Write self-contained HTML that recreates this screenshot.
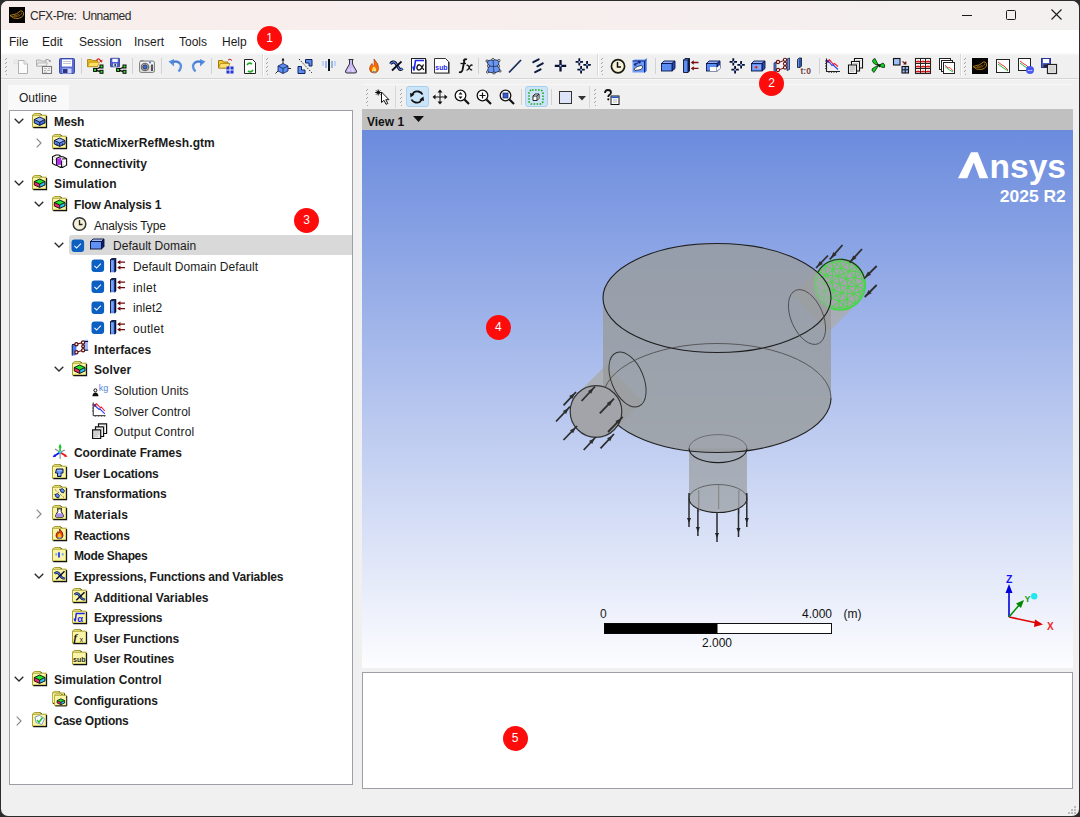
<!DOCTYPE html><html><head><meta charset="utf-8"><style>
*{box-sizing:border-box;margin:0;padding:0}
html,body{width:1080px;height:817px;overflow:hidden;background:#2c2c2c;font-family:"Liberation Sans",sans-serif;font-size:12px;color:#1b1b1b}
.a{position:absolute}
svg.a{overflow:visible}
.t{position:absolute;white-space:nowrap;font-size:12px;line-height:14px;color:#1b1b1b}
.b{font-weight:bold}
.mi{position:absolute;top:35px;font-size:12px;line-height:14px;color:#1b1b1b}
.badge{position:absolute;width:25px;height:25px;border-radius:50%;background:#fe0b0b;color:#fff;font-size:12px;line-height:25px;text-align:center}
.sep{position:absolute;width:1px;background:#d2d2d2}
.grip{position:absolute;width:2px;height:18px;background:linear-gradient(-45deg,transparent 35%,#a4a4a4 35%,#a4a4a4 65%,transparent 65%) 0 0/2px 4px repeat-y}
</style></head><body>
<div class="a" style="left:1px;top:1px;width:1078px;height:815px;background:#f0f0f0;border-radius:7px;overflow:hidden">
<div class="a" style="left:0;top:0;width:1078px;height:29px;background:linear-gradient(90deg,#f8eeec 0%,#f7efee 50%,#f3f0f0 100%)"></div>
<div class="a" style="left:0;top:29px;width:1078px;height:23px;background:#fff"></div>
<div class="a" style="left:0;top:52px;width:1078px;height:2px;background:#f7f7f7"></div>
<div class="a" style="left:0;top:77px;width:1078px;height:1px;background:#d4d4d4"></div>
<div class="a" style="left:0;top:78px;width:1078px;height:1px;background:#f8f8f8"></div>
</div>
<svg class="a" style="left:9px;top:7px" width="16" height="16" viewBox="0 0 16 16"><rect x="0" y="0" width="16" height="16" fill="#050403"/><path d="M1 8.5Q4 12 9 11.5Q13 11 14.5 8Q15 5 13 4Q11 3.5 10 5Q8 7 5 7.5Q2.5 8 1 8.5Z" fill="none" stroke="#c08a18" stroke-width="0.9"/><path d="M3 9.5Q7 10.5 11 8.5Q13 7 12.5 5.5M5 8.5Q8 9 10.5 7" stroke="#a87010" stroke-width="0.7" fill="none"/></svg>
<div class="t" style="left:30px;top:9px;color:#2a2a2a;letter-spacing:-0.45px">CFX-Pre:&nbsp; Unnamed</div>
<div class="a" style="left:962px;top:15px;width:10px;height:1px;background:#1a1a1a"></div>
<div class="a" style="left:1006px;top:10px;width:10px;height:10px;border:1px solid #1a1a1a;border-radius:1.5px"></div>
<svg class="a" style="left:1051px;top:9px" width="11" height="11"><path d="M0.5 0.5L10.5 10.5M10.5 0.5L0.5 10.5" stroke="#1a1a1a" stroke-width="1.1"/></svg>
<div class="mi" style="left:9px">File</div>
<div class="mi" style="left:42px">Edit</div>
<div class="mi" style="left:79px">Session</div>
<div class="mi" style="left:134px">Insert</div>
<div class="mi" style="left:179px">Tools</div>
<div class="mi" style="left:222px">Help</div>
<div class="grip" style="left:5px;top:57px"></div>
<svg class="a" style="left:13px;top:58px" width="16" height="16" viewBox="0 0 16 16"><path d="M5.5 2.5H11L14.5 6V15.5H5.5Z" fill="#fbfbfb" stroke="#b0b0b0"/><path d="M11 2.5V6H14.5" fill="#eee" stroke="#c0c0c0"/><path d="M3 1V7M0 4H6M1 2L5 6M5 2L1 6" stroke="#dadada" stroke-width="0.9"/><circle cx="3" cy="4" r="1.2" fill="#eee"/></svg>
<svg class="a" style="left:36px;top:58px" width="16" height="16" viewBox="0 0 16 16"><path d="M0.5 2H4.5L5.5 3H10V8H0.5Z" fill="#e2e2e2" stroke="#aaa" stroke-width="0.9"/><path d="M0.5 8L2 5H11.5L10 8Z" fill="#f2f2f2" stroke="#aaa" stroke-width="0.7"/><path d="M9 2.5Q11 0.5 13 2L14 3" stroke="#999" fill="none"/><path d="M15 1.8L14.5 4.3L12.5 3.5Z" fill="#999"/><rect x="6.5" y="8.5" width="9" height="7" fill="#f6f6f6" stroke="#777" stroke-width="1.1"/><path d="M8 10.7H11M12 10.7H14M8 12.5H10M11 12.5H14M8 14.2H11" stroke="#999" stroke-width="0.7"/></svg>
<svg class="a" style="left:59px;top:58px" width="16" height="16" viewBox="0 0 16 16"><rect x="0.5" y="0.5" width="15" height="15" rx="1" fill="#5b6ed6" stroke="#3b4aa8"/><rect x="3" y="1.5" width="10" height="7" fill="#fff"/><path d="M4 3.5H12M4 5.5H12" stroke="#aab" stroke-width="0.7"/><rect x="3.5" y="10.5" width="9" height="5" fill="#cfd6ff"/><rect x="4" y="11" width="4.5" height="4" fill="#2a3580"/></svg>
<svg class="a" style="left:87px;top:58px" width="16" height="16" viewBox="0 0 16 16"><path d="M0.5 1.5H4.5L5.5 2.5H10.5V8.6H0.5Z" fill="#e8b818" stroke="#a07a10" stroke-width="0.8"/><path d="M0.5 8.6L2.5 4.2H12.5L10.5 8.6Z" fill="#ffe060" stroke="#b08a10" stroke-width="0.7"/><path d="M9.5 2.5Q11 0 12.5 1.5L14 3" stroke="#dd2020" stroke-width="1.2" fill="none"/><path d="M15.5 1.5L15 4.5L12.5 3.8Z" fill="#dd2020"/><path d="M8 12L14.5 8.5M8 12L14.5 13.8" stroke="#111" stroke-width="1.4"/><g fill="#2ee02e" stroke="#0a0a0a" stroke-width="1"><rect x="6.6" y="10.4" width="3" height="3"/><rect x="13" y="7" width="3" height="3"/><rect x="13" y="12.3" width="3" height="3"/></g></svg>
<svg class="a" style="left:110px;top:58px" width="16" height="16" viewBox="0 0 16 16"><rect x="0.5" y="0.3" width="9" height="8.5" rx="0.5" fill="#4a5ed0" stroke="#2a3590" stroke-width="0.8"/><rect x="2.3" y="0.8" width="5.5" height="3.2" fill="#f4f4ff"/><rect x="3" y="5.5" width="4" height="3" fill="#d8dcf8"/><rect x="4.5" y="5.8" width="1.4" height="2.4" fill="#223"/><path d="M8 12L14.5 8.5M8 12L14.5 13.8" stroke="#111" stroke-width="1.4"/><g fill="#2ee02e" stroke="#0a0a0a" stroke-width="1"><rect x="6.6" y="10.4" width="3" height="3"/><rect x="13" y="7" width="3" height="3"/><rect x="13" y="12.3" width="3" height="3"/></g></svg>
<svg class="a" style="left:139px;top:58px" width="16" height="16" viewBox="0 0 16 16"><rect x="0.5" y="3" width="15" height="11.5" rx="1.8" fill="#dcdcdc" stroke="#777" stroke-width="0.9"/><rect x="1.5" y="4" width="13" height="3" fill="#f4f4f4"/><circle cx="6" cy="9" r="3.8" fill="#bbb" stroke="#555" stroke-width="0.9"/><circle cx="6" cy="9" r="2.2" fill="#3a6ad0" stroke="#222" stroke-width="0.6"/><rect x="12" y="6.5" width="2" height="6.5" fill="#555"/><circle cx="11" cy="4.5" r="0.9" fill="#3a6ad0"/><rect x="1.5" y="2" width="3" height="1.2" fill="#888"/></svg>
<svg class="a" style="left:168px;top:58px" width="16" height="16" viewBox="0 0 16 16"><path d="M3.5 4.5Q9 2 12 5.5Q14.5 9 10.5 13.5" stroke="#5a90e0" stroke-width="2.4" fill="none"/><path d="M0.5 3.5L6 1V8.5Z" fill="#5a90e0"/><path d="M3.5 4.5Q9 2 12 5.5" stroke="#2a60c0" stroke-width="0.6" fill="none"/></svg>
<svg class="a" style="left:190px;top:58px" width="16" height="16" viewBox="0 0 16 16"><path d="M12.5 4.5Q7 2 4 5.5Q1.5 9 5.5 13.5" stroke="#5a90e0" stroke-width="2.4" fill="none"/><path d="M15.5 3.5L10 1V8.5Z" fill="#5a90e0"/><path d="M12.5 4.5Q7 2 4 5.5" stroke="#2a60c0" stroke-width="0.6" fill="none"/></svg>
<svg class="a" style="left:218px;top:58px" width="16" height="16" viewBox="0 0 16 16"><path d="M0.5 2.5H4.5L5.5 4H10V10H0.5Z" fill="#f0c828" stroke="#a07a10"/><path d="M0.5 10L2.5 5.5H12L10 10Z" fill="#ffe070" stroke="#a07a10" stroke-width="0.7"/><path d="M10 2Q12 0 14 2.5" stroke="#dd2222" fill="none"/><rect x="8.5" y="8.5" width="7" height="7" fill="#2233dd"/><path d="M12 8.5V15.5M8.5 12H15.5" stroke="#fff" stroke-width="0.9"/></svg>
<svg class="a" style="left:242px;top:58px" width="16" height="16" viewBox="0 0 16 16"><path d="M2.5 1.5H10.5L13.5 4.5V15.5H2.5Z" fill="#fff" stroke="#222"/><path d="M5 7Q7 4 10 6" stroke="#22aa22" stroke-width="1.6" fill="none"/><path d="M11 12Q9 15 6 13" stroke="#22aa22" stroke-width="1.6" fill="none"/></svg>
<svg class="a" style="left:275px;top:58px" width="16" height="16" viewBox="0 0 16 16"><path d="M3 8L8 5.5L13 8V13L8 15.5L3 13Z" fill="#5b8ef0" stroke="#10205a" stroke-width="0.8"/><path d="M3 8L8 10.5L13 8M8 10.5V15.5" stroke="#10205a" stroke-width="0.8" fill="none"/><path d="M8 5.5V0.5M13 10.5H16M3 13L0.5 15.5" stroke="#111" stroke-width="0.9"/><path d="M8 0L6.5 2.5H9.5Z" fill="#111"/></svg>
<svg class="a" style="left:297px;top:58px" width="16" height="16" viewBox="0 0 16 16"><path d="M8.5 1.5H15V8H12V5H8.5Z" fill="#5b8ef0" stroke="#10205a"/><path d="M1 8.5H4.5V12H8V15.5H1Z" fill="#5b8ef0" stroke="#10205a"/><path d="M2 1L15 15" stroke="#222" stroke-dasharray="1.5 1.5"/></svg>
<svg class="a" style="left:321px;top:58px" width="16" height="16" viewBox="0 0 16 16"><path d="M8 1V13" stroke="#111" stroke-width="2"/><path d="M5 3V10M11 3V10" stroke="#5b8ef0" stroke-width="1.2"/><path d="M2 3V8M14 3V8" stroke="#a9c0f5" stroke-width="1.2"/></svg>
<svg class="a" style="left:343px;top:58px" width="16" height="16" viewBox="0 0 16 16"><path d="M5.5 1.5H10.5M6.5 1.5V6L2.5 13Q2 15 4 15H12Q14 15 13.5 13L9.5 6V1.5" fill="#c9b8f5" stroke="#333"/><circle cx="6" cy="12" r="0.7" fill="#fff"/><circle cx="9" cy="11" r="0.7" fill="#fff"/><circle cx="10" cy="13" r="0.7" fill="#fff"/></svg>
<svg class="a" style="left:366px;top:58px" width="16" height="16" viewBox="0 0 16 16"><path d="M8 1Q13 6 12.5 10.5Q12 15 8 15Q4 15 3.5 11Q3.5 8 6 5.5Q6.5 8 8 8.5Q8.5 5 8 1Z" fill="#ff6a00" stroke="#9a2a00" stroke-width="0.6"/><path d="M8 8Q10.5 10.5 10 13Q9 14.5 8 14.5Q6 14.5 6 12.5Q6 10.5 8 8Z" fill="#ffe15a"/><path d="M7 13Q8 14.8 9.5 13.5" stroke="#3a8ae0" stroke-width="1.2" fill="none"/></svg>
<svg class="a" style="left:389px;top:58px" width="16" height="16" viewBox="0 0 16 16"><path d="M1.5 6Q3.5 2.5 6.5 5L10 10.5Q11.5 12.5 13.5 10.5" stroke="#0a0a20" stroke-width="3" fill="none"/><path d="M1.5 6Q3.5 2.5 6.5 5L10 10.5Q11.5 12.5 13.5 10.5" stroke="#5a8af0" stroke-width="1.2" fill="none"/><path d="M12.5 3.5L3 12.5" stroke="#0a0a20" stroke-width="1.8"/></svg>
<svg class="a" style="left:411px;top:58px" width="16" height="16" viewBox="0 0 16 16"><rect x="0.5" y="0.5" width="14" height="14.5" fill="#fff" stroke="#222" stroke-width="1"/><path d="M1.5 15.5H15.5V1.5" stroke="#555" stroke-width="0.8" fill="none"/><path d="M2 8.5L3 12.5L4.5 2.5H13" stroke="#1a28f0" stroke-width="1.6" fill="none"/><path d="M12.5 6.5Q10 12.5 7.5 12Q5.5 11.5 6 9Q6.5 6.5 8.5 6.8Q10.5 7.5 12.8 12" stroke="#111" stroke-width="1.3" fill="none"/></svg>
<svg class="a" style="left:434px;top:58px" width="16" height="16" viewBox="0 0 16 16"><path d="M0.5 0.5H11.5L14.5 3.5V15H0.5Z" fill="#fff" stroke="#333" stroke-width="1"/><path d="M1.5 15.5H15.5V4" stroke="#666" stroke-width="0.8" fill="none"/><text x="1.3" y="11.5" font-size="8" fill="#2a2af0" font-weight="bold" font-family="Liberation Sans" textLength="12.3" lengthAdjust="spacingAndGlyphs">sub</text></svg>
<svg class="a" style="left:457px;top:58px" width="16" height="16" viewBox="0 0 16 16"><path d="M6.5 3Q7.5 0.5 10 1.5M7.5 2L5.5 12Q4.5 15 2 14" stroke="#111" stroke-width="1.8" fill="none"/><path d="M3.5 5.5H9" stroke="#111" stroke-width="1.3"/><path d="M9.5 7.5Q10.5 6.5 11.5 8L13 11Q14 12.5 15 11.5M9.5 12Q11 12.5 12.5 9L13.5 7.5Q14.5 6.5 15.5 7.5" stroke="#111" stroke-width="1.3" fill="none"/></svg>
<svg class="a" style="left:485px;top:58px" width="16" height="16" viewBox="0 0 16 16"><path d="M2 3L8 1.5L14 2.5L13.5 8L15 13L9 15L2.5 14L3.5 8Z" fill="#6a98f0" stroke="#10205a" stroke-width="0.8"/><path d="M3.5 8L8.5 8.5L13.5 8M8 1.5L8.5 8.5L9 15" stroke="#10205a" stroke-width="0.7" fill="none"/><g fill="#fff" stroke="#111" stroke-width="0.7"><circle cx="2" cy="3" r="1.1"/><circle cx="8" cy="1.5" r="1.1"/><circle cx="14" cy="2.5" r="1.1"/><circle cx="3.5" cy="8" r="1.1"/><circle cx="13.5" cy="8" r="1.1"/><circle cx="2.5" cy="14" r="1.1"/><circle cx="9" cy="15" r="1.1"/><circle cx="15" cy="13" r="1.1"/></g></svg>
<svg class="a" style="left:507px;top:58px" width="16" height="16" viewBox="0 0 16 16"><path d="M2 14.5L14 2" stroke="#1a2a5a" stroke-width="1.8"/></svg>
<svg class="a" style="left:530px;top:58px" width="16" height="16" viewBox="0 0 16 16"><path d="M3.3 4.2L8.7 1.3M7.4 8.3L12.8 5.4M5.2 14.2L10.6 11.4" stroke="#0f1a40" stroke-width="2" stroke-linecap="round"/></svg>
<svg class="a" style="left:553px;top:58px" width="16" height="16" viewBox="0 0 16 16"><path d="M1.7999999999999998 7.8H13.2M7.5 2.0999999999999996V13.5" stroke="#0a1030" stroke-width="2.3"/><path d="M5.7 7.8L7.5 6.0L9.3 7.8L7.5 9.6Z" fill="#0a1030"/><circle cx="7.5" cy="7.8" r="1" fill="#9ec0ff"/></svg>
<svg class="a" style="left:575px;top:58px" width="16" height="16" viewBox="0 0 16 16"><path d="M0.5999999999999996 3.9H8.0M4.3 0.19999999999999973V7.6" stroke="#0a1030" stroke-width="1.8"/><path d="M2.5 3.9L4.3 2.0999999999999996L6.1 3.9L4.3 5.7Z" fill="#0a1030"/><circle cx="4.3" cy="3.9" r="1" fill="#9ec0ff"/><path d="M8.399999999999999 6.8H15.8M12.1 3.0999999999999996V10.5" stroke="#0a1030" stroke-width="1.8"/><path d="M10.299999999999999 6.8L12.1 5.0L13.9 6.8L12.1 8.6Z" fill="#0a1030"/><circle cx="12.1" cy="6.8" r="1" fill="#9ec0ff"/><path d="M2.3999999999999995 11.7H9.8M6.1 7.999999999999999V15.399999999999999" stroke="#0a1030" stroke-width="1.8"/><path d="M4.3 11.7L6.1 9.899999999999999L7.8999999999999995 11.7L6.1 13.5Z" fill="#0a1030"/><circle cx="6.1" cy="11.7" r="1" fill="#9ec0ff"/></svg>
<svg class="a" style="left:610px;top:58px" width="16" height="16" viewBox="0 0 16 16"><circle cx="8" cy="8.2" r="6.6" fill="#f5f2d8" stroke="#1a1a10" stroke-width="1.7"/><path d="M7.5 4V9H11" stroke="#111" stroke-width="1.5" fill="none"/></svg>
<svg class="a" style="left:632px;top:58px" width="16" height="16" viewBox="0 0 16 16"><path d="M0.5 3L2.5 1.5H14.5V13L13 14.5H0.5Z" fill="#6e9cf8"/><path d="M12.5 3L14.5 1.5V13L12.5 14.5Z" fill="#3a6ae0"/><path d="M0.5 3H12.5V14.5M12.5 3L14.8 0.8" stroke="#0a1a70" stroke-width="0.9" fill="none"/><path d="M2 11Q5 8 9 7.5Q11 7.5 10.5 9.5L9 11.5L3 12.5Z" fill="#fff" stroke="#111" stroke-width="0.7"/><path d="M2 7L8.5 3.5M2 7L3.5 5M2 7L4.5 7.3M8.5 3.5L6 3.4M8.5 3.5L7.5 5.5" stroke="#1a2a80" stroke-width="1.1" fill="none"/></svg>
<svg class="a" style="left:661px;top:58px" width="16" height="16" viewBox="0 0 16 16"><path d="M0.5 5.5L3 3H14L11 5.5Z" fill="#8fb2ff" stroke="#0a1550" stroke-width="0.9"/><path d="M11 5.5L14 3V10.5L11 13Z" fill="#2a4ab0" stroke="#0a1550" stroke-width="0.9"/><rect x="0.5" y="5.5" width="10.5" height="7.5" fill="#5b8ef0" stroke="#0a1550" stroke-width="0.9"/></svg>
<svg class="a" style="left:683px;top:58px" width="16" height="16" viewBox="0 0 16 16"><path d="M0.5 2L2 0.5H6.5V13L5 14.5H0.5Z" fill="#5b8ef0" stroke="#0a1030" stroke-width="0.9"/><path d="M5 14.5V2L6.5 0.5M0.5 2H5" stroke="#0a1030" stroke-width="0.9" fill="none"/><path d="M5.2 2.2L6.3 1.1V12.8L5.2 13.9Z" fill="#0a1030"/><path d="M9 4.5H15.5M9 10.4H15.5" stroke="#7a1010" stroke-width="1.3"/><path d="M7.8 4.5L10.8 2.3V6.7ZM7.8 10.4L10.8 8.2V12.6Z" fill="#7a1010"/></svg>
<svg class="a" style="left:706px;top:58px" width="16" height="16" viewBox="0 0 16 16"><path d="M0.5 5.5L3 3H14L11 5.5Z" fill="#8fb2ff" stroke="#0a1550" stroke-width="0.9"/><path d="M11 5.5L14 3V10.5L11 13Z" fill="#2a4ab0" stroke="#0a1550" stroke-width="0.9"/><rect x="0.5" y="5.5" width="10.5" height="7.5" fill="#5b8ef0" stroke="#0a1550" stroke-width="0.9"/><rect x="4" y="9" width="6.5" height="4" fill="#fff"/><path d="M11 9.5L14 7V10.5L11 13Z" fill="#fff"/></svg>
<svg class="a" style="left:729px;top:58px" width="16" height="16" viewBox="0 0 16 16"><path d="M0.5999999999999996 3.9H8.0M4.3 0.19999999999999973V7.6" stroke="#0a1030" stroke-width="1.8"/><path d="M2.5 3.9L4.3 2.0999999999999996L6.1 3.9L4.3 5.7Z" fill="#0a1030"/><circle cx="4.3" cy="3.9" r="1" fill="#9ec0ff"/><path d="M8.399999999999999 6.8H15.8M12.1 3.0999999999999996V10.5" stroke="#0a1030" stroke-width="1.8"/><path d="M10.299999999999999 6.8L12.1 5.0L13.9 6.8L12.1 8.6Z" fill="#0a1030"/><circle cx="12.1" cy="6.8" r="1" fill="#9ec0ff"/><path d="M2.3999999999999995 11.7H9.8M6.1 7.999999999999999V15.399999999999999" stroke="#0a1030" stroke-width="1.8"/><path d="M4.3 11.7L6.1 9.899999999999999L7.8999999999999995 11.7L6.1 13.5Z" fill="#0a1030"/><circle cx="6.1" cy="11.7" r="1" fill="#9ec0ff"/></svg>
<svg class="a" style="left:751px;top:58px" width="16" height="16" viewBox="0 0 16 16"><path d="M0.5 5.5L3 3H14L11 5.5Z" fill="#8fb2ff" stroke="#0a1550" stroke-width="0.9"/><path d="M11 5.5L14 3V10.5L11 13Z" fill="#2a4ab0" stroke="#0a1550" stroke-width="0.9"/><rect x="0.5" y="5.5" width="10.5" height="7.5" fill="#5b8ef0" stroke="#0a1550" stroke-width="0.9"/><rect x="2" y="7" width="8" height="4.5" fill="#84aaf8"/><path d="M3 9.2H6M5 8L6.5 9.2L5 10.4Z" fill="#dd2222" stroke="#dd2222" stroke-width="0.8"/></svg>
<svg class="a" style="left:774px;top:58px" width="16" height="16" viewBox="0 0 16 16"><path d="M0 5L2 4V14L0 15Z" fill="#5b8ef0" stroke="#0a1030" stroke-width="0.7"/><path d="M13 1L15.5 0V11.5L13 12.5Z" fill="#5b8ef0" stroke="#0a1030" stroke-width="0.7"/><path d="M2.5 5.5L12 1.5M2.5 12.5L12 9.5M11 2V9.5" stroke="#6a1010" stroke-width="1"/><g fill="#fff" stroke="#6a1010" stroke-width="1.1"><circle cx="4" cy="4" r="1.6"/><circle cx="11" cy="1.8" r="1.6"/><circle cx="11" cy="5.8" r="1.6"/><circle cx="4" cy="12" r="1.6"/><circle cx="11" cy="9.5" r="1.6"/></g></svg>
<svg class="a" style="left:797px;top:58px" width="16" height="16" viewBox="0 0 16 16"><path d="M0.5 1.5L2 0H4.5V8L3 9.5H0.5Z" fill="#5b8ef0" stroke="#0a1030" stroke-width="0.8"/><path d="M3 9.5V1.5L4.5 0" stroke="#0a1030" fill="none" stroke-width="0.9"/><text x="3.5" y="16.3" font-size="8.5" fill="#6e4040" font-weight="bold" font-family="Liberation Sans">t:0</text></svg>
<svg class="a" style="left:825px;top:58px" width="16" height="16" viewBox="0 0 16 16"><path d="M1.5 0.5V13.5H15" stroke="#222" stroke-width="1.1" fill="none"/><path d="M0 3H1.5M0 5.5H1.5M0 8H1.5M0 10.5H1.5M4 13.5V15M6.5 13.5V15M9 13.5V15M11.5 13.5V15" stroke="#222" stroke-width="0.8"/><path d="M2 3.2L4.5 1.8L8.5 6.5L9.5 5.5L13 8.5" stroke="#f02030" stroke-width="1.1" fill="none"/><path d="M2 2.5L4.5 4.5L7 7.5L8 6.8L13 11.5" stroke="#3040f0" stroke-width="1.1" fill="none"/><circle cx="3" cy="3.5" r="1.2" fill="#6a1a8a"/></svg>
<svg class="a" style="left:848px;top:58px" width="16" height="16" viewBox="0 0 16 16"><path d="M6.5 0.5H14.5V10H6.5Z" fill="#fafafa" stroke="#111" stroke-width="1.1"/><path d="M8 2.5H13M8 4H12" stroke="#aaa" stroke-width="0.7"/><path d="M3.5 3.5H11.5V13H3.5Z" fill="#f6f6f6" stroke="#111" stroke-width="1.1"/><path d="M5 5.5H10M5 7H9.5" stroke="#aaa" stroke-width="0.7"/><path d="M0.5 7H8.5V15.5H0.5Z" fill="#f2f2f2" stroke="#111" stroke-width="1.1"/><path d="M2 9H7M2 11H7M2 13H6" stroke="#999" stroke-width="0.8"/></svg>
<svg class="a" style="left:871px;top:58px" width="16" height="16" viewBox="0 0 16 16"><path d="M7.5 7.5L4 0.5Q1.5 1 1.5 3.5Q2.5 6.5 7.5 7.5Z" fill="#10d020" stroke="#0a2a0a" stroke-width="0.8"/><path d="M7.5 7.5L3 14.5Q0.5 13 1 11Q3 9 7.5 7.5Z" fill="#10d020" stroke="#0a2a0a" stroke-width="0.8"/><path d="M7.5 7.5L12 5Q14.5 6.5 13.5 9.5Q11 10 7.5 7.5Z" fill="#10d020" stroke="#0a2a0a" stroke-width="0.8"/><path d="M5.5 6L10 6.5L8.5 9.5Z" fill="#111"/></svg>
<svg class="a" style="left:893px;top:58px" width="16" height="16" viewBox="0 0 16 16"><rect x="0.5" y="0.5" width="6.5" height="6.5" fill="#a0c0f8" stroke="#111" stroke-width="1.1"/><path d="M9.5 3.5L12.5 5.5M12.8 3.5V6H10.5" stroke="#6a1010" stroke-width="1.1" fill="none"/><rect x="9" y="8.5" width="6.5" height="6.5" fill="#98b8f8" stroke="#111" stroke-width="1.1"/><path d="M12.2 8.5V15M9 11.8H15.5" stroke="#111" stroke-width="1"/></svg>
<svg class="a" style="left:915px;top:58px" width="16" height="16" viewBox="0 0 16 16"><rect x="0.5" y="0.5" width="15" height="15" fill="#fff" stroke="#222" stroke-width="1.1"/><path d="M5.5 0.5V15.5M10.5 0.5V15.5M0.5 5.5H15.5M0.5 10.5H15.5" stroke="#222" stroke-width="1"/><path d="M1 3.5Q3 1.5 5 3.2V4.3H1Z" fill="#ee2020"/><path d="M1 3.8H5" stroke="#cc1010" stroke-width="0.9"/><path d="M1 8.5Q3 6.5 5 8.2V9.3H1Z" fill="#ee2020"/><path d="M1 8.8H5" stroke="#cc1010" stroke-width="0.9"/><path d="M1 13.5Q3 11.5 5 13.2V14.3H1Z" fill="#ee2020"/><path d="M1 13.8H5" stroke="#cc1010" stroke-width="0.9"/><path d="M6 3.5Q8 1.5 10 3.2V4.3H6Z" fill="#ee2020"/><path d="M6 3.8H10" stroke="#cc1010" stroke-width="0.9"/><path d="M6 8.5Q8 6.5 10 8.2V9.3H6Z" fill="#ee2020"/><path d="M6 8.8H10" stroke="#cc1010" stroke-width="0.9"/><path d="M6 13.5Q8 11.5 10 13.2V14.3H6Z" fill="#ee2020"/><path d="M6 13.8H10" stroke="#cc1010" stroke-width="0.9"/><path d="M11 3.5Q13 1.5 15 3.2V4.3H11Z" fill="#ee2020"/><path d="M11 3.8H15" stroke="#cc1010" stroke-width="0.9"/><path d="M11 8.5Q13 6.5 15 8.2V9.3H11Z" fill="#ee2020"/><path d="M11 8.8H15" stroke="#cc1010" stroke-width="0.9"/><path d="M11 13.5Q13 11.5 15 13.2V14.3H11Z" fill="#ee2020"/><path d="M11 13.8H15" stroke="#cc1010" stroke-width="0.9"/></svg>
<svg class="a" style="left:939px;top:58px" width="16" height="16" viewBox="0 0 16 16"><rect x="0.5" y="0.5" width="11" height="11" fill="#fff" stroke="#222"/><rect x="2.5" y="2.5" width="11" height="11" fill="#fff" stroke="#222"/><rect x="4.5" y="4.5" width="11" height="11" fill="#fff" stroke="#222"/><path d="M6 7L9 10L11 9.5L14 13" stroke="#ee3344" stroke-width="0.9" fill="none"/><path d="M6 8.5L9 11L14 14" stroke="#22bb33" stroke-width="0.9" fill="none"/></svg>
<svg class="a" style="left:972px;top:58px" width="16" height="16" viewBox="0 0 16 16"><rect x="0" y="0" width="16" height="16" fill="#050403"/><path d="M1 8.5Q4 12 9 11.5Q13 11 14.5 8Q15 5 13 4Q11 3.5 10 5Q8 7 5 7.5Q2.5 8 1 8.5Z" fill="none" stroke="#c08a18" stroke-width="0.9"/><path d="M3 9.5Q7 10.5 11 8.5Q13 7 12.5 5.5M5 8.5Q8 9 10.5 7" stroke="#a87010" stroke-width="0.7" fill="none"/></svg>
<svg class="a" style="left:995px;top:58px" width="16" height="16" viewBox="0 0 16 16"><rect x="1.5" y="1.5" width="13" height="13" fill="#fff" stroke="#222"/><path d="M3 4L7 7L9 8L13 12" stroke="#ee3344" stroke-width="1" fill="none"/><path d="M3 6L7 9L13 13" stroke="#22bb33" stroke-width="1" fill="none"/></svg>
<svg class="a" style="left:1018px;top:58px" width="16" height="16" viewBox="0 0 16 16"><rect x="0.5" y="0.5" width="12" height="12" fill="#fff" stroke="#222"/><path d="M2 3L6 6L8 7L12 11" stroke="#ee3344" stroke-width="1" fill="none"/><path d="M2 5L6 8L12 12" stroke="#22bb33" stroke-width="1" fill="none"/><circle cx="12" cy="12" r="4" fill="#4a5af0"/><g fill="#fff"><circle cx="10.3" cy="12.5" r="0.6"/><circle cx="12" cy="12.5" r="0.6"/><circle cx="13.7" cy="12.5" r="0.6"/></g></svg>
<svg class="a" style="left:1041px;top:58px" width="16" height="16" viewBox="0 0 16 16"><rect x="0.5" y="0.5" width="9" height="9" fill="#4a60d0" stroke="#2a3590"/><rect x="2" y="1" width="6" height="4" fill="#fff"/><rect x="2.5" y="6.5" width="4" height="3" fill="#223"/><rect x="6.5" y="6.5" width="9" height="9" fill="#f4f4f4" stroke="#222" stroke-width="1.2"/><path d="M8 9H14M8 11H14M8 13H14" stroke="#999" stroke-width="0.7"/></svg>
<div class="sep" style="left:81px;top:58px;height:16px"></div>
<div class="sep" style="left:132px;top:58px;height:16px"></div>
<div class="sep" style="left:161px;top:58px;height:16px"></div>
<div class="sep" style="left:211px;top:58px;height:16px"></div>
<div class="sep" style="left:478px;top:58px;height:16px"></div>
<div class="sep" style="left:655px;top:58px;height:16px"></div>
<div class="sep" style="left:819px;top:58px;height:16px"></div>
<div class="a" style="left:262px;top:54px;width:1px;height:22px;background:#d8d8d8"></div>
<div class="a" style="left:263px;top:54px;width:1px;height:22px;background:#fff"></div>
<div class="grip" style="left:266px;top:57px"></div>
<div class="a" style="left:597px;top:54px;width:1px;height:22px;background:#d8d8d8"></div>
<div class="a" style="left:598px;top:54px;width:1px;height:22px;background:#fff"></div>
<div class="grip" style="left:601px;top:57px"></div>
<div class="a" style="left:960px;top:54px;width:1px;height:22px;background:#d8d8d8"></div>
<div class="a" style="left:961px;top:54px;width:1px;height:22px;background:#fff"></div>
<div class="grip" style="left:964px;top:57px"></div>
<div class="a" style="left:362px;top:84px;width:711px;height:1px;background:#f8f8f8"></div>
<div class="grip" style="left:366px;top:88px"></div>
<svg class="a" style="left:375px;top:89px" width="16" height="16" viewBox="0 0 16 16"><path d="M6.5 3V13.5L9 11.3L11 15.3L12.8 14.5L10.8 10.7H14Z" fill="#fff" stroke="#111" stroke-width="1"/><path d="M3.2 0.5V6.5M0.2 3.5H6.2M1.1 1.4L5.3 5.6M5.3 1.4L1.1 5.6" stroke="#111" stroke-width="1"/><circle cx="3.2" cy="3.5" r="1.4" fill="#111"/></svg>
<div class="a" style="left:395px;top:86px;width:1px;height:22px;background:#d8d8d8"></div>
<div class="grip" style="left:400px;top:88px"></div>
<div class="a" style="left:406px;top:86px;width:23px;height:21px;background:#cce4f7;border:1px solid #a8d0f0;border-radius:3px"></div>
<svg class="a" style="left:409px;top:89px" width="16" height="16" viewBox="0 0 16 16"><path d="M3 6Q5 1.5 9.5 2.5Q12.5 3.2 13.5 5.5" stroke="#111" stroke-width="1.8" fill="none"/><path d="M1 4L5.5 5.5L1.5 8.5Z" fill="#111"/><path d="M13 10Q11 14.5 6.5 13.5Q3.5 12.8 2.5 10.5" stroke="#111" stroke-width="1.8" fill="none"/><path d="M15 12L10.5 10.5L14.5 7.5Z" fill="#111"/></svg>
<svg class="a" style="left:432px;top:89px" width="16" height="16" viewBox="0 0 16 16"><path d="M8 2.5V13.5M2.5 8H13.5" stroke="#111" stroke-width="1"/><path d="M8 0.5L5.5 3.5H10.5ZM8 15.5L5.5 12.5H10.5ZM0.5 8L3.5 5.5V10.5ZM15.5 8L12.5 5.5V10.5Z" fill="#111"/></svg>
<svg class="a" style="left:454px;top:89px" width="16" height="16" viewBox="0 0 16 16"><circle cx="6.5" cy="6.5" r="5.3" fill="#fff" stroke="#111" stroke-width="1.3"/><path d="M10.5 10.5L15 15" stroke="#111" stroke-width="2.2"/><path d="M6.5 3L4.5 5.5H8.5ZM6.5 10L4.5 7.5H8.5Z" fill="#111"/></svg>
<svg class="a" style="left:476px;top:89px" width="16" height="16" viewBox="0 0 16 16"><circle cx="6.5" cy="6.5" r="5.3" fill="#fff" stroke="#111" stroke-width="1.3"/><path d="M10.5 10.5L15 15" stroke="#111" stroke-width="2.2"/><path d="M6.5 3.5V9.5M3.5 6.5H9.5" stroke="#111" stroke-width="1.2"/></svg>
<svg class="a" style="left:499px;top:89px" width="16" height="16" viewBox="0 0 16 16"><circle cx="6.5" cy="6.5" r="5.3" fill="#fff" stroke="#111" stroke-width="1.3"/><path d="M10.5 10.5L15 15" stroke="#111" stroke-width="2.2"/><rect x="4" y="4" width="5" height="5" fill="#3a5ad0" stroke="#10205a" stroke-width="0.7"/></svg>
<div class="sep" style="left:521px;top:89px;height:16px"></div>
<div class="a" style="left:525px;top:86px;width:23px;height:21px;background:#cce4f7;border:1px solid #a8d0f0;border-radius:3px"></div>
<svg class="a" style="left:528px;top:89px" width="16" height="16" viewBox="0 0 16 16"><rect x="1" y="1" width="14" height="14" rx="3" fill="none" stroke="#22aa22" stroke-width="1.6" stroke-dasharray="1.6 1.4"/><path d="M5 7L7 5H11V9.5L9 11.5H5Z" fill="#fff" stroke="#111" stroke-width="0.9"/><path d="M5 7H9V11.5M9 7L11 5" stroke="#111" stroke-width="0.9" fill="none"/></svg>
<div class="sep" style="left:551px;top:89px;height:16px"></div>
<svg class="a" style="left:559px;top:91px" width="16" height="16" viewBox="0 0 16 16"><rect x="0.5" y="0.5" width="12" height="12" fill="#dde4f8" stroke="#333"/></svg>
<svg class="a" style="left:578px;top:96px" width="8" height="5"><path d="M0 0H8L4 4.5Z" fill="#333"/></svg>
<div class="a" style="left:589px;top:86px;width:1px;height:22px;background:#d8d8d8"></div>
<div class="grip" style="left:594px;top:88px"></div>
<svg class="a" style="left:604px;top:89px" width="16" height="16" viewBox="0 0 16 16"><path d="M1 4Q1 1 4 1Q7 1 7 3.5Q7 5 5.2 6Q4.3 6.6 4.3 8" stroke="#111" stroke-width="1.8" fill="none"/><circle cx="4.3" cy="10.3" r="1.1" fill="#111"/><rect x="7" y="7" width="8" height="8.5" fill="#fff" stroke="#111" stroke-width="1"/><rect x="7.5" y="7.5" width="7" height="1.6" fill="#2058c8"/><path d="M9 11H13M9 13H13" stroke="#999" stroke-width="0.7"/></svg>
<div class="a" style="left:8px;top:85px;width:61px;height:26px;background:#f9f9f9"></div>
<div class="t" style="left:19px;top:91px">Outline</div>
<div class="a" style="left:9px;top:110px;width:344px;height:675px;background:#fff;border:1px solid #9ca0a6"></div>
<svg class="a" style="left:14px;top:118.1px" width="10" height="6"><path d="M0.7 0.7L5 5L9.3 0.7" stroke="#2a2a2a" stroke-width="1.3" fill="none"/></svg>
<svg class="a" style="left:32px;top:113.0px" width="16" height="16" viewBox="0 0 16 16"><path d="M1.5 2.2V1.2L2.3 0.5H8.2L9.6 2.2" fill="#f4ee9a" stroke="#aaa22c" stroke-width="1"/><path d="M8.3 0.6L9.8 2.1" stroke="#111" stroke-width="0.9"/><rect x="0.5" y="2.2" width="13.6" height="11.8" fill="#faf4a8" stroke="#aaa22c" stroke-width="1"/><path d="M14.6 3V14.6H1.3" stroke="#121212" stroke-width="1.1" fill="none"/><path d="M2.3 6.5L7.7 9V12.4L2.3 10Z" fill="#4e80ea"/><path d="M13 6.5L7.7 9V12.4L13 10Z" fill="#3a68d6"/><path d="M2.3 6.5L7.7 4L13 6.5L7.7 9Z" fill="#94b4fa"/><path d="M2.3 6.5L7.7 4L13 6.5V10L7.7 12.4L2.3 10ZM2.3 6.5L7.7 9L13 6.5M7.7 9V12.4" stroke="#0a0f30" stroke-width="0.9" fill="none" stroke-linejoin="round"/></svg>
<div class="t b" style="left:54px;top:115.4px;letter-spacing:-0.100px">Mesh</div>
<svg class="a" style="left:35.8px;top:137.7px" width="6" height="10"><path d="M0.7 0.7L5 5L0.7 9.3" stroke="#8a8a8a" stroke-width="1.2" fill="none"/></svg>
<svg class="a" style="left:52px;top:133.7px" width="16" height="16" viewBox="0 0 16 16"><path d="M1.5 2.2V1.2L2.3 0.5H8.2L9.6 2.2" fill="#f4ee9a" stroke="#aaa22c" stroke-width="1"/><path d="M8.3 0.6L9.8 2.1" stroke="#111" stroke-width="0.9"/><rect x="0.5" y="2.2" width="13.6" height="11.8" fill="#faf4a8" stroke="#aaa22c" stroke-width="1"/><path d="M14.6 3V14.6H1.3" stroke="#121212" stroke-width="1.1" fill="none"/><path d="M2.3 6.5L7.7 4L13 6.5V10L7.7 12.4L2.3 10Z" fill="#5a8cf0"/><path d="M2.3 6.5L7.7 4L13 6.5L7.7 9Z" fill="#9ab8fa"/><path d="M2.3 6.5L7.7 4L13 6.5V10L7.7 12.4L2.3 10ZM2.3 6.5L7.7 9L13 6.5M7.7 9V12.4M5 9.5V11.3M10.4 9.5V11.3" stroke="#0a0f30" stroke-width="0.9" fill="none"/></svg>
<div class="t b" style="left:74px;top:136.1px;letter-spacing:0.067px">StaticMixerRefMesh.gtm</div>
<svg class="a" style="left:52px;top:154.3px" width="16" height="16" viewBox="0 0 16 16"><path d="M0.5 2.8L4 1H7L9.6 2.7V9.5L6.5 11.2H3.5L0.5 9.5Z" fill="#fff" stroke="#111" stroke-width="1.1"/><path d="M2 3.5H8M2 6H8" stroke="#ccc" stroke-width="0.6"/><path d="M4.5 4.6L8 2.8H11L14.6 4.6V11.3L11 13.3H8L4.5 11.3Z" fill="#fff" stroke="#111" stroke-width="1.1"/><path d="M4.9 5L9.3 3.6V10.8L4.9 11Z" fill="#b42cf0"/><path d="M9.6 6.5V13.3M8.2 13.4H11M10 5L14.3 4.8" stroke="#111" stroke-width="1.1"/><path d="M1 5.5H4.5M11 8H14M11 11H14" stroke="#bbb" stroke-width="0.7" stroke-dasharray="1 1"/></svg>
<div class="t b" style="left:74px;top:156.7px;letter-spacing:0.073px">Connectivity</div>
<svg class="a" style="left:14px;top:180.1px" width="10" height="6"><path d="M0.7 0.7L5 5L9.3 0.7" stroke="#2a2a2a" stroke-width="1.3" fill="none"/></svg>
<svg class="a" style="left:32px;top:175.0px" width="16" height="16" viewBox="0 0 16 16"><path d="M1.5 2.2V1.2L2.3 0.5H8.2L9.6 2.2" fill="#f4ee9a" stroke="#aaa22c" stroke-width="1"/><path d="M8.3 0.6L9.8 2.1" stroke="#111" stroke-width="0.9"/><rect x="0.5" y="2.2" width="13.6" height="11.8" fill="#faf4a8" stroke="#aaa22c" stroke-width="1"/><path d="M14.6 3V14.6H1.3" stroke="#121212" stroke-width="1.1" fill="none"/><path d="M2.3 6.5L7.7 9V12.4L2.3 10Z" fill="#f0286a"/><path d="M13 6.5L7.7 9V12.4L13 10Z" fill="#28c0f5"/><path d="M2.3 6.5L7.7 4L13 6.5L7.7 9Z" fill="#1ee62a"/><path d="M2.3 6.5L7.7 4L13 6.5V10L7.7 12.4L2.3 10ZM2.3 6.5L7.7 9L13 6.5M7.7 9V12.4" stroke="#0a0a0a" stroke-width="0.9" fill="none" stroke-linejoin="round"/></svg>
<div class="t b" style="left:54px;top:177.4px;letter-spacing:0.133px">Simulation</div>
<svg class="a" style="left:34px;top:200.7px" width="10" height="6"><path d="M0.7 0.7L5 5L9.3 0.7" stroke="#2a2a2a" stroke-width="1.3" fill="none"/></svg>
<svg class="a" style="left:52px;top:195.6px" width="16" height="16" viewBox="0 0 16 16"><path d="M1.5 2.2V1.2L2.3 0.5H8.2L9.6 2.2" fill="#f4ee9a" stroke="#aaa22c" stroke-width="1"/><path d="M8.3 0.6L9.8 2.1" stroke="#111" stroke-width="0.9"/><rect x="0.5" y="2.2" width="13.6" height="11.8" fill="#faf4a8" stroke="#aaa22c" stroke-width="1"/><path d="M14.6 3V14.6H1.3" stroke="#121212" stroke-width="1.1" fill="none"/><path d="M2.3 6.5L7.7 9V12.4L2.3 10Z" fill="#f0286a"/><path d="M13 6.5L7.7 9V12.4L13 10Z" fill="#28c0f5"/><path d="M2.3 6.5L7.7 4L13 6.5L7.7 9Z" fill="#1ee62a"/><path d="M2.3 6.5L7.7 4L13 6.5V10L7.7 12.4L2.3 10ZM2.3 6.5L7.7 9L13 6.5M7.7 9V12.4" stroke="#0a0a0a" stroke-width="0.9" fill="none" stroke-linejoin="round"/></svg>
<div class="t b" style="left:74px;top:198.0px;letter-spacing:-0.150px">Flow Analysis 1</div>
<svg class="a" style="left:72px;top:216.3px" width="16" height="16" viewBox="0 0 16 16"><circle cx="7.5" cy="8" r="6.3" fill="#f4f1d8" stroke="#333" stroke-width="1.5"/><path d="M7.5 4V8.5H10.5" stroke="#222" stroke-width="1.3" fill="none"/></svg>
<div class="t" style="left:94px;top:218.7px;letter-spacing:-0.167px">Analysis Type</div>
<div class="a" style="left:69px;top:235px;width:283px;height:20px;background:#d9d9d9;border-radius:3px 0 0 3px"></div>
<svg class="a" style="left:54px;top:242.0px" width="10" height="6"><path d="M0.7 0.7L5 5L9.3 0.7" stroke="#2a2a2a" stroke-width="1.3" fill="none"/></svg>
<svg class="a" style="left:71.2px;top:238.7px" width="14" height="14" viewBox="0 0 14 14"><rect x="0.5" y="0.5" width="12.6" height="12.6" rx="3" fill="#0b60c2"/><path d="M3.4 6.9L5.6 9L9.9 4.6" stroke="#f4f8ff" stroke-width="1.05" fill="none"/></svg>
<svg class="a" style="left:90.2px;top:238.1px" width="16" height="16" viewBox="0 0 16 16"><path d="M0.5 3.5L3 1H14L11.5 3.5Z" fill="#9cbcff" stroke="#0a1030" stroke-width="0.9"/><path d="M11.5 3.5L14 1V8.5L11.5 11Z" fill="#10206a" stroke="#0a1030" stroke-width="0.9"/><rect x="0.5" y="3.5" width="11" height="7.5" fill="#5f92f8" stroke="#0a1030" stroke-width="0.9"/></svg>
<div class="t" style="left:113px;top:239.3px;letter-spacing:0.031px">Default Domain</div>
<svg class="a" style="left:91.2px;top:259.4px" width="14" height="14" viewBox="0 0 14 14"><rect x="0.5" y="0.5" width="12.6" height="12.6" rx="3" fill="#0b60c2"/><path d="M3.4 6.9L5.6 9L9.9 4.6" stroke="#f4f8ff" stroke-width="1.05" fill="none"/></svg>
<svg class="a" style="left:110.2px;top:257.6px" width="16" height="16" viewBox="0 0 16 16"><path d="M0.5 1.6L1.8 0.5H6.2V13L4.9 14.3H0.5Z" fill="#5c90f8"/><path d="M4.8 1.6L6.2 0.5V13L4.8 14.3Z" fill="#0a1030"/><path d="M0.5 14.3V1.6L1.8 0.5H6.2M0.5 1.6H4.8V14.3" stroke="#0a1030" stroke-width="0.9" fill="none"/><path d="M2 3V12" stroke="#9cc0ff" stroke-width="0.8"/><path d="M8.5 4.2H15M8.5 9.6H15" stroke="#700c0c" stroke-width="1.3"/><path d="M7.2 4.2L10.4 2V6.4ZM7.2 9.6L10.4 7.4V11.8Z" fill="#700c0c"/></svg>
<div class="t" style="left:133px;top:260.0px;letter-spacing:0.052px">Default Domain Default</div>
<svg class="a" style="left:91.2px;top:280.0px" width="14" height="14" viewBox="0 0 14 14"><rect x="0.5" y="0.5" width="12.6" height="12.6" rx="3" fill="#0b60c2"/><path d="M3.4 6.9L5.6 9L9.9 4.6" stroke="#f4f8ff" stroke-width="1.05" fill="none"/></svg>
<svg class="a" style="left:110.2px;top:278.2px" width="16" height="16" viewBox="0 0 16 16"><path d="M0.5 1.6L1.8 0.5H6.2V13L4.9 14.3H0.5Z" fill="#5c90f8"/><path d="M4.8 1.6L6.2 0.5V13L4.8 14.3Z" fill="#0a1030"/><path d="M0.5 14.3V1.6L1.8 0.5H6.2M0.5 1.6H4.8V14.3" stroke="#0a1030" stroke-width="0.9" fill="none"/><path d="M2 3V12" stroke="#9cc0ff" stroke-width="0.8"/><path d="M8.5 4.2H15M8.5 9.6H15" stroke="#700c0c" stroke-width="1.3"/><path d="M7.2 4.2L10.4 2V6.4ZM7.2 9.6L10.4 7.4V11.8Z" fill="#700c0c"/></svg>
<div class="t" style="left:133px;top:280.6px;letter-spacing:0.300px">inlet</div>
<svg class="a" style="left:91.2px;top:300.7px" width="14" height="14" viewBox="0 0 14 14"><rect x="0.5" y="0.5" width="12.6" height="12.6" rx="3" fill="#0b60c2"/><path d="M3.4 6.9L5.6 9L9.9 4.6" stroke="#f4f8ff" stroke-width="1.05" fill="none"/></svg>
<svg class="a" style="left:110.2px;top:298.9px" width="16" height="16" viewBox="0 0 16 16"><path d="M0.5 1.6L1.8 0.5H6.2V13L4.9 14.3H0.5Z" fill="#5c90f8"/><path d="M4.8 1.6L6.2 0.5V13L4.8 14.3Z" fill="#0a1030"/><path d="M0.5 14.3V1.6L1.8 0.5H6.2M0.5 1.6H4.8V14.3" stroke="#0a1030" stroke-width="0.9" fill="none"/><path d="M2 3V12" stroke="#9cc0ff" stroke-width="0.8"/><path d="M8.5 4.2H15M8.5 9.6H15" stroke="#700c0c" stroke-width="1.3"/><path d="M7.2 4.2L10.4 2V6.4ZM7.2 9.6L10.4 7.4V11.8Z" fill="#700c0c"/></svg>
<div class="t" style="left:133px;top:301.3px;letter-spacing:0.100px">inlet2</div>
<svg class="a" style="left:91.2px;top:321.3px" width="14" height="14" viewBox="0 0 14 14"><rect x="0.5" y="0.5" width="12.6" height="12.6" rx="3" fill="#0b60c2"/><path d="M3.4 6.9L5.6 9L9.9 4.6" stroke="#f4f8ff" stroke-width="1.05" fill="none"/></svg>
<svg class="a" style="left:110.2px;top:319.5px" width="16" height="16" viewBox="0 0 16 16"><path d="M0.5 1.6L1.8 0.5H6.2V13L4.9 14.3H0.5Z" fill="#5c90f8"/><path d="M4.8 1.6L6.2 0.5V13L4.8 14.3Z" fill="#0a1030"/><path d="M0.5 14.3V1.6L1.8 0.5H6.2M0.5 1.6H4.8V14.3" stroke="#0a1030" stroke-width="0.9" fill="none"/><path d="M2 3V12" stroke="#9cc0ff" stroke-width="0.8"/><path d="M8.5 4.2H15M8.5 9.6H15" stroke="#700c0c" stroke-width="1.3"/><path d="M7.2 4.2L10.4 2V6.4ZM7.2 9.6L10.4 7.4V11.8Z" fill="#700c0c"/></svg>
<div class="t" style="left:133px;top:321.9px;letter-spacing:0.300px">outlet</div>
<svg class="a" style="left:72px;top:340.2px" width="16" height="16" viewBox="0 0 16 16"><path d="M0.2 4.5L1.5 3.8H4.4V14.5L3 15.5H0.2Z" fill="#4a7ef0"/><path d="M0.2 15.5V5M0.2 4.5H4.4" stroke="#0a1030" stroke-width="1"/><path d="M12 0.5L13.3 -0.3H16V10L14.6 10.8H12Z" fill="#9cbcff"/><path d="M13 1.5H16.2M13 10.2H16.2" stroke="#0a1030" stroke-width="1"/><path d="M4.4 4.3L11.1 2.4V10.2L4.4 12.3" stroke="#5a0a0a" stroke-width="1.1" fill="none"/><g fill="#fff" stroke="#5a0a0a" stroke-width="1.2"><circle cx="4.4" cy="4.3" r="1.6"/><circle cx="11.1" cy="2.4" r="1.6"/><circle cx="11.1" cy="6.3" r="1.4"/><circle cx="11.1" cy="10.2" r="1.6"/><circle cx="4.4" cy="12.3" r="1.6"/></g></svg>
<div class="t b" style="left:94px;top:342.6px;letter-spacing:0.044px">Interfaces</div>
<svg class="a" style="left:54px;top:366.0px" width="10" height="6"><path d="M0.7 0.7L5 5L9.3 0.7" stroke="#2a2a2a" stroke-width="1.3" fill="none"/></svg>
<svg class="a" style="left:72px;top:360.9px" width="16" height="16" viewBox="0 0 16 16"><path d="M1.5 2.2V1.2L2.3 0.5H8.2L9.6 2.2" fill="#f4ee9a" stroke="#aaa22c" stroke-width="1"/><path d="M8.3 0.6L9.8 2.1" stroke="#111" stroke-width="0.9"/><rect x="0.5" y="2.2" width="13.6" height="11.8" fill="#faf4a8" stroke="#aaa22c" stroke-width="1"/><path d="M14.6 3V14.6H1.3" stroke="#121212" stroke-width="1.1" fill="none"/><path d="M2.3 6.5L7.7 9V12.4L2.3 10Z" fill="#f0286a"/><path d="M13 6.5L7.7 9V12.4L13 10Z" fill="#28c0f5"/><path d="M2.3 6.5L7.7 4L13 6.5L7.7 9Z" fill="#1ee62a"/><path d="M2.3 6.5L7.7 4L13 6.5V10L7.7 12.4L2.3 10ZM2.3 6.5L7.7 9L13 6.5M7.7 9V12.4" stroke="#0a0a0a" stroke-width="0.9" fill="none" stroke-linejoin="round"/></svg>
<div class="t b" style="left:94px;top:363.3px;letter-spacing:0.100px">Solver</div>
<svg class="a" style="left:92px;top:381.5px" width="16" height="16" viewBox="0 0 16 16"><circle cx="3.4" cy="8.3" r="1.5" fill="#fff" stroke="#111" stroke-width="1"/><path d="M0.4 14.2Q0.6 10.6 3.4 10.4Q6.2 10.6 6.5 14.2Z" fill="#111"/><text x="6.8" y="9" font-size="9" fill="#5585d8" font-family="Liberation Sans">kg</text></svg>
<div class="t" style="left:114px;top:383.9px;letter-spacing:0.038px">Solution Units</div>
<svg class="a" style="left:92px;top:402.2px" width="16" height="16" viewBox="0 0 16 16"><path d="M1.2 0.5V13.7H13.5" stroke="#222" stroke-width="1" fill="none"/><path d="M0 3H1.5M0 6H1.5M0 9H1.5M3.5 13.5V14.7M6.5 13.5V14.7M9.5 13.5V14.7M12.5 13.5V14.7" stroke="#444" stroke-width="0.8"/><path d="M2 3.2L4.5 1.8L8.5 5.8L9.3 5L12.8 9" stroke="#f02030" stroke-width="1.1" fill="none"/><path d="M2 2.8L4.5 5L7 7.5L7.8 6.8L12.8 11.8" stroke="#3040f0" stroke-width="1.1" fill="none"/><circle cx="3" cy="3.5" r="1.3" fill="#6a1a8a"/></svg>
<div class="t" style="left:114px;top:404.6px;letter-spacing:0.038px">Solver Control</div>
<svg class="a" style="left:92px;top:422.8px" width="16" height="16" viewBox="0 0 16 16"><path d="M6.5 0.8H14.6V10.5H6.5Z" fill="#fafafa" stroke="#111" stroke-width="1.2"/><path d="M3.5 3.8H11.6V13.5H3.5Z" fill="#f4f4f4" stroke="#111" stroke-width="1.2"/><path d="M0.6 6.8H8.7V15.5H0.6Z" fill="#e8e8e8" stroke="#111" stroke-width="1.2"/><path d="M2 9H7.5M2 11H7.5M2 13H6" stroke="#aaa" stroke-width="0.8"/><path d="M8 6H10.5M11 3H13.5" stroke="#bbb" stroke-width="0.8"/></svg>
<div class="t" style="left:114px;top:425.2px;letter-spacing:0.162px">Output Control</div>
<svg class="a" style="left:52px;top:443.5px" width="16" height="16" viewBox="0 0 16 16"><path d="M8.1 8.3L3 5M8.1 8.3L12.8 5.9M8.1 8.3V15" stroke="#888" stroke-width="1.1"/><path d="M8.1 8.3V2" stroke="#10c020" stroke-width="1.6"/><path d="M8.1 -0.5L6.5 3.5H9.7Z" fill="#10c020"/><path d="M8.1 8.3L2 12.3" stroke="#1020f0" stroke-width="1.8"/><path d="M0.5 13.3L2.5 10.3L4 12.8Z" fill="#1020f0"/><path d="M8.1 8.3L14 12" stroke="#f01818" stroke-width="1.8"/><path d="M15.5 13L12 12.6L13.4 10.3Z" fill="#f01818"/><circle cx="8.1" cy="8.3" r="1.3" fill="#20e0e0"/></svg>
<div class="t b" style="left:74px;top:445.9px;letter-spacing:-0.094px">Coordinate Frames</div>
<svg class="a" style="left:52px;top:464.1px" width="16" height="16" viewBox="0 0 16 16"><path d="M1.5 2.2V1.2L2.3 0.5H8.2L9.6 2.2" fill="#f4ee9a" stroke="#aaa22c" stroke-width="1"/><path d="M8.3 0.6L9.8 2.1" stroke="#111" stroke-width="0.9"/><rect x="0.5" y="2.2" width="13.6" height="11.8" fill="#faf4a8" stroke="#aaa22c" stroke-width="1"/><path d="M14.6 3V14.6H1.3" stroke="#121212" stroke-width="1.1" fill="none"/><path d="M4.5 5H11V9H9V12.5H5.5V9H3.5Z" fill="#6a98f8" stroke="#0a1550" stroke-width="1"/><path d="M5.5 6.5H9.5M6.5 10.5H8.5" stroke="#c0d4ff" stroke-width="0.8"/></svg>
<div class="t b" style="left:74px;top:466.5px;letter-spacing:-0.146px">User Locations</div>
<svg class="a" style="left:52px;top:484.8px" width="16" height="16" viewBox="0 0 16 16"><path d="M1.5 2.2V1.2L2.3 0.5H8.2L9.6 2.2" fill="#f4ee9a" stroke="#aaa22c" stroke-width="1"/><path d="M8.3 0.6L9.8 2.1" stroke="#111" stroke-width="0.9"/><rect x="0.5" y="2.2" width="13.6" height="11.8" fill="#faf4a8" stroke="#aaa22c" stroke-width="1"/><path d="M14.6 3V14.6H1.3" stroke="#121212" stroke-width="1.1" fill="none"/><path d="M3 4.5L12.5 13M2.5 9L6 12.5M7 4L11 8" stroke="#333" stroke-width="0.9" stroke-dasharray="1 1.2"/><path d="M8 4.5L10.5 3.5L12.5 5.5L11.5 8L9 7Z" fill="#5a8af0" stroke="#0a1550" stroke-width="0.8"/><path d="M3 9.5L5.5 8.5L7.5 10.5L6.5 13L4 12Z" fill="#5a8af0" stroke="#0a1550" stroke-width="0.8"/></svg>
<div class="t b" style="left:74px;top:487.2px;letter-spacing:-0.093px">Transformations</div>
<svg class="a" style="left:35.8px;top:509.4px" width="6" height="10"><path d="M0.7 0.7L5 5L0.7 9.3" stroke="#8a8a8a" stroke-width="1.2" fill="none"/></svg>
<svg class="a" style="left:52px;top:505.4px" width="16" height="16" viewBox="0 0 16 16"><path d="M1.5 2.2V1.2L2.3 0.5H8.2L9.6 2.2" fill="#f4ee9a" stroke="#aaa22c" stroke-width="1"/><path d="M8.3 0.6L9.8 2.1" stroke="#111" stroke-width="0.9"/><rect x="0.5" y="2.2" width="13.6" height="11.8" fill="#faf4a8" stroke="#aaa22c" stroke-width="1"/><path d="M14.6 3V14.6H1.3" stroke="#121212" stroke-width="1.1" fill="none"/><path d="M5 3.8H10M5.8 3.8V6.5L3.6 10.5Q3.2 12.2 4.8 12.2H10.2Q11.8 12.2 11.4 10.5L9.2 6.5V3.8" fill="#fff" stroke="#111" stroke-width="1"/><path d="M4 10.3L5 8.3H10L11 10.3Q11.2 11.8 10 11.8H5Q3.8 11.8 4 10.3Z" fill="#a890f0"/></svg>
<div class="t b" style="left:74px;top:507.8px;letter-spacing:0.237px">Materials</div>
<svg class="a" style="left:52px;top:526.1px" width="16" height="16" viewBox="0 0 16 16"><path d="M1.5 2.2V1.2L2.3 0.5H8.2L9.6 2.2" fill="#f4ee9a" stroke="#aaa22c" stroke-width="1"/><path d="M8.3 0.6L9.8 2.1" stroke="#111" stroke-width="0.9"/><rect x="0.5" y="2.2" width="13.6" height="11.8" fill="#faf4a8" stroke="#aaa22c" stroke-width="1"/><path d="M14.6 3V14.6H1.3" stroke="#121212" stroke-width="1.1" fill="none"/><path d="M7.5 3Q11.5 6.5 11 9.8Q10.6 12.8 7.5 12.8Q4.4 12.8 4 10Q3.8 7.5 6 5.5Q6.2 7.3 7.3 7.5Q7.8 5.5 7.5 3Z" fill="#f04010" stroke="#701000" stroke-width="0.8"/><path d="M7.5 6.8Q9.8 9 9.4 10.8Q9 12.3 7.5 12.3Q6 12.3 5.6 10.8Q5.5 9 7.5 6.8Z" fill="#ffc020"/><path d="M6 11.3Q7.5 13 9 11.3" stroke="#5aa0f0" stroke-width="1.3" fill="none"/></svg>
<div class="t b" style="left:74px;top:528.5px;letter-spacing:-0.175px">Reactions</div>
<svg class="a" style="left:52px;top:546.8px" width="16" height="16" viewBox="0 0 16 16"><path d="M1.5 2.2V1.2L2.3 0.5H8.2L9.6 2.2" fill="#f4ee9a" stroke="#aaa22c" stroke-width="1"/><path d="M8.3 0.6L9.8 2.1" stroke="#111" stroke-width="0.9"/><rect x="0.5" y="2.2" width="13.6" height="11.8" fill="#faf4a8" stroke="#aaa22c" stroke-width="1"/><path d="M14.6 3V14.6H1.3" stroke="#121212" stroke-width="1.1" fill="none"/><path d="M7 5.2V10.4" stroke="#1030f0" stroke-width="1.7"/><path d="M4.3 6V8.6M10.7 6V8.6" stroke="#80a8ff" stroke-width="1.8"/></svg>
<div class="t b" style="left:74px;top:549.2px;letter-spacing:-0.380px">Mode Shapes</div>
<svg class="a" style="left:34px;top:572.5px" width="10" height="6"><path d="M0.7 0.7L5 5L9.3 0.7" stroke="#2a2a2a" stroke-width="1.3" fill="none"/></svg>
<svg class="a" style="left:52px;top:567.4px" width="16" height="16" viewBox="0 0 16 16"><path d="M1.5 2.2V1.2L2.3 0.5H8.2L9.6 2.2" fill="#f4ee9a" stroke="#aaa22c" stroke-width="1"/><path d="M8.3 0.6L9.8 2.1" stroke="#111" stroke-width="0.9"/><rect x="0.5" y="2.2" width="13.6" height="11.8" fill="#faf4a8" stroke="#aaa22c" stroke-width="1"/><path d="M14.6 3V14.6H1.3" stroke="#121212" stroke-width="1.1" fill="none"/><path d="M2.8 6.8Q4.5 4.3 6.8 6.5L9.3 10Q10.8 12 12.8 10.8" stroke="#0a1030" stroke-width="2.6" fill="none"/><path d="M2.8 6.8Q4.5 4.3 6.8 6.5L9.3 10Q10.8 12 12.8 10.8" stroke="#5a8af0" stroke-width="1.1" fill="none"/><path d="M12.5 4.3L4.3 12.3" stroke="#0a1030" stroke-width="1.5"/></svg>
<div class="t b" style="left:74px;top:569.8px;letter-spacing:-0.189px">Expressions, Functions and Variables</div>
<svg class="a" style="left:72px;top:588.1px" width="16" height="16" viewBox="0 0 16 16"><path d="M1.5 2.2V1.2L2.3 0.5H8.2L9.6 2.2" fill="#f4ee9a" stroke="#aaa22c" stroke-width="1"/><path d="M8.3 0.6L9.8 2.1" stroke="#111" stroke-width="0.9"/><rect x="0.5" y="2.2" width="13.6" height="11.8" fill="#faf4a8" stroke="#aaa22c" stroke-width="1"/><path d="M14.6 3V14.6H1.3" stroke="#121212" stroke-width="1.1" fill="none"/><path d="M2.8 6.8Q4.5 4.3 6.8 6.5L9.3 10Q10.8 12 12.8 10.8" stroke="#0a1030" stroke-width="2.6" fill="none"/><path d="M2.8 6.8Q4.5 4.3 6.8 6.5L9.3 10Q10.8 12 12.8 10.8" stroke="#5a8af0" stroke-width="1.1" fill="none"/><path d="M12.5 4.3L4.3 12.3" stroke="#0a1030" stroke-width="1.5"/></svg>
<div class="t b" style="left:94px;top:590.5px;letter-spacing:-0.011px">Additional Variables</div>
<svg class="a" style="left:72px;top:608.7px" width="16" height="16" viewBox="0 0 16 16"><path d="M1.5 2.2V1.2L2.3 0.5H8.2L9.6 2.2" fill="#f4ee9a" stroke="#aaa22c" stroke-width="1"/><path d="M8.3 0.6L9.8 2.1" stroke="#111" stroke-width="0.9"/><rect x="0.5" y="2.2" width="13.6" height="11.8" fill="#faf4a8" stroke="#aaa22c" stroke-width="1"/><path d="M14.6 3V14.6H1.3" stroke="#121212" stroke-width="1.1" fill="none"/><path d="M2.2 9.5L3.2 12.3L4.3 4.5H12.8" stroke="#1a28f0" stroke-width="1.5" fill="none"/><text x="5.3" y="12.6" font-size="9.5" fill="#1a28f0" font-family="Liberation Sans" font-weight="bold">&#945;</text></svg>
<div class="t b" style="left:94px;top:611.1px;letter-spacing:-0.290px">Expressions</div>
<svg class="a" style="left:72px;top:629.4px" width="16" height="16" viewBox="0 0 16 16"><path d="M1.5 2.2V1.2L2.3 0.5H8.2L9.6 2.2" fill="#f4ee9a" stroke="#aaa22c" stroke-width="1"/><path d="M8.3 0.6L9.8 2.1" stroke="#111" stroke-width="0.9"/><rect x="0.5" y="2.2" width="13.6" height="11.8" fill="#faf4a8" stroke="#aaa22c" stroke-width="1"/><path d="M14.6 3V14.6H1.3" stroke="#121212" stroke-width="1.1" fill="none"/><text x="1.5" y="12.2" font-size="11" font-style="italic" font-weight="bold" fill="#111" font-family="Liberation Serif">f</text><text x="7.8" y="12.5" font-size="6.5" fill="#111" font-family="Liberation Sans">x</text></svg>
<div class="t b" style="left:94px;top:631.8px;letter-spacing:-0.169px">User Functions</div>
<svg class="a" style="left:72px;top:650.0px" width="16" height="16" viewBox="0 0 16 16"><path d="M1.5 2.2V1.2L2.3 0.5H8.2L9.6 2.2" fill="#f4ee9a" stroke="#aaa22c" stroke-width="1"/><path d="M8.3 0.6L9.8 2.1" stroke="#111" stroke-width="0.9"/><rect x="0.5" y="2.2" width="13.6" height="11.8" fill="#faf4a8" stroke="#aaa22c" stroke-width="1"/><path d="M14.6 3V14.6H1.3" stroke="#121212" stroke-width="1.1" fill="none"/><text x="1" y="12.3" font-size="8" fill="#2a2a2a" font-weight="bold" font-family="Liberation Sans" textLength="12.5" lengthAdjust="spacingAndGlyphs">sub</text></svg>
<div class="t b" style="left:94px;top:652.4px;letter-spacing:-0.100px">User Routines</div>
<svg class="a" style="left:14px;top:675.8px" width="10" height="6"><path d="M0.7 0.7L5 5L9.3 0.7" stroke="#2a2a2a" stroke-width="1.3" fill="none"/></svg>
<svg class="a" style="left:32px;top:670.7px" width="16" height="16" viewBox="0 0 16 16"><path d="M1.5 2.2V1.2L2.3 0.5H8.2L9.6 2.2" fill="#f4ee9a" stroke="#aaa22c" stroke-width="1"/><path d="M8.3 0.6L9.8 2.1" stroke="#111" stroke-width="0.9"/><rect x="0.5" y="2.2" width="13.6" height="11.8" fill="#faf4a8" stroke="#aaa22c" stroke-width="1"/><path d="M14.6 3V14.6H1.3" stroke="#121212" stroke-width="1.1" fill="none"/><path d="M2.3 6.5L7.7 9V12.4L2.3 10Z" fill="#f0286a"/><path d="M13 6.5L7.7 9V12.4L13 10Z" fill="#28c0f5"/><path d="M2.3 6.5L7.7 4L13 6.5L7.7 9Z" fill="#1ee62a"/><path d="M2.3 6.5L7.7 4L13 6.5V10L7.7 12.4L2.3 10ZM2.3 6.5L7.7 9L13 6.5M7.7 9V12.4" stroke="#0a0a0a" stroke-width="0.9" fill="none" stroke-linejoin="round"/></svg>
<div class="t b" style="left:54px;top:673.1px;letter-spacing:0.012px">Simulation Control</div>
<svg class="a" style="left:52px;top:691.3px" width="16" height="16" viewBox="0 0 16 16"><g transform="translate(0 0) scale(0.86)"><path d="M1.5 2.2V1.2L2.3 0.5H8.2L9.6 2.2" fill="#f4ee9a" stroke="#aaa22c" stroke-width="1"/><path d="M8.3 0.6L9.8 2.1" stroke="#111" stroke-width="0.9"/><rect x="0.5" y="2.2" width="13.6" height="11.8" fill="#faf4a8" stroke="#aaa22c" stroke-width="1"/><path d="M14.6 3V14.6H1.3" stroke="#121212" stroke-width="1.1" fill="none"/></g><g transform="translate(2.2 2.4) scale(0.86)"><path d="M1.5 2.2V1.2L2.3 0.5H8.2L9.6 2.2" fill="#f4ee9a" stroke="#aaa22c" stroke-width="1"/><path d="M8.3 0.6L9.8 2.1" stroke="#111" stroke-width="0.9"/><rect x="0.5" y="2.2" width="13.6" height="11.8" fill="#faf4a8" stroke="#aaa22c" stroke-width="1"/><path d="M14.6 3V14.6H1.3" stroke="#121212" stroke-width="1.1" fill="none"/></g><g transform="translate(3.5 5) scale(0.7)"><path d="M2.3 6.5L7.7 9V12.4L2.3 10Z" fill="#f0286a"/><path d="M13 6.5L7.7 9V12.4L13 10Z" fill="#28c0f5"/><path d="M2.3 6.5L7.7 4L13 6.5L7.7 9Z" fill="#1ee62a"/><path d="M2.3 6.5L7.7 4L13 6.5V10L7.7 12.4L2.3 10ZM2.3 6.5L7.7 9L13 6.5M7.7 9V12.4" stroke="#0a0a0a" stroke-width="1.1" fill="none"/></g></svg>
<div class="t b" style="left:74px;top:693.7px;letter-spacing:-0.115px">Configurations</div>
<svg class="a" style="left:15.8px;top:716.0px" width="6" height="10"><path d="M0.7 0.7L5 5L0.7 9.3" stroke="#8a8a8a" stroke-width="1.2" fill="none"/></svg>
<svg class="a" style="left:32px;top:712.0px" width="16" height="16" viewBox="0 0 16 16"><path d="M1.5 2.2V1.2L2.3 0.5H8.2L9.6 2.2" fill="#f4ee9a" stroke="#aaa22c" stroke-width="1"/><path d="M8.3 0.6L9.8 2.1" stroke="#111" stroke-width="0.9"/><rect x="0.5" y="2.2" width="13.6" height="11.8" fill="#faf4a8" stroke="#aaa22c" stroke-width="1"/><path d="M14.6 3V14.6H1.3" stroke="#121212" stroke-width="1.1" fill="none"/><path d="M7.5 3.5L12.5 6.5L10 12.5L4 10.5L3 5Z" fill="#fff" stroke="#7090c8" stroke-width="0.9"/><path d="M5 8L7 10.2L10.5 5.5" stroke="#20c030" stroke-width="1.5" fill="none"/></svg>
<div class="t b" style="left:54px;top:714.4px;letter-spacing:-0.236px">Case Options</div>
<div class="a" style="left:362px;top:109px;width:711px;height:21px;background:#c0c0c0"></div>
<div class="t b" style="left:367px;top:114.5px;color:#111">View 1</div>
<svg class="a" style="left:413px;top:116px" width="11" height="7"><path d="M0 0H11L5.5 6Z" fill="#111"/></svg>
<div class="a" style="left:362px;top:130px;width:711px;height:538px;background:linear-gradient(180deg,#6b8bdd 0%,#fdfdff 100%)"></div>
<svg class="a" style="left:0;top:0" width="1080" height="817" viewBox="0 0 1080 817">
<defs><clipPath id="gc"><circle cx="840" cy="284.5" r="26.5"/></clipPath><clipPath id="vpc"><rect x="362" y="130" width="711" height="538"/></clipPath></defs>
<g clip-path="url(#vpc)">
<path d="M614.2 429.7 L642.5 401.5 L606.0 365.0 L577.8 393.3 Z" fill="#a9abae" fill-opacity="0.85"/>
<path d="M820.8 266.8 L792.5 295.0 L829.0 331.5 L857.2 303.2 Z" fill="#a9abae" fill-opacity="0.85"/>
<path d="M603 298 A114 54.5 0 0 1 831 298 L831 398 A114 54.5 0 0 1 603 398 Z" fill="#999c9e" fill-opacity="0.82"/>
<path d="M689 448.6 L747 448.6 L747 498.5 A29 14 0 0 1 689 498.5 Z" fill="#999c9e" fill-opacity="0.7"/>
<ellipse cx="717" cy="298" rx="114" ry="54.5" fill="none" stroke="#1e1e1e" stroke-width="1.1"/>
<path d="M603 398 A114 54.5 0 0 1 831 398" fill="none" stroke="#4a4a4a" stroke-width="0.85"/>
<path d="M603 398 A114 54.5 0 0 0 831 398" fill="none" stroke="#222" stroke-width="1.1"/>
<ellipse cx="627.5" cy="379.5" rx="29" ry="16" transform="rotate(67 627.5 379.5)" fill="none" stroke="#333" stroke-width="0.95"/>
<ellipse cx="807" cy="317" rx="29" ry="16" transform="rotate(67 807 317)" fill="none" stroke="#4a4a4a" stroke-width="0.85"/>
<path d="M689 448.6 A29 14 0 0 1 747 448.6" fill="none" stroke="#666" stroke-width="0.9"/>
<path d="M689 448.6 A29 14 0 0 0 747 448.6" fill="none" stroke="#1e1e1e" stroke-width="1.1"/>
<path d="M689 498.5 A29 14 0 0 1 747 498.5" fill="none" stroke="#5a5a5a" stroke-width="0.9"/><path d="M689 498.5 A29 14 0 0 0 747 498.5" fill="none" stroke="#222" stroke-width="1.1"/>
<circle cx="596" cy="411.5" r="25.8" fill="#a2a4a9" stroke="#333" stroke-width="1.2"/>
<g>
<circle cx="840" cy="284.5" r="25.2" fill="#a3a6aa" stroke="#38d838" stroke-width="1.6"/><circle cx="840" cy="284.5" r="23" fill="none" stroke="#48d848" stroke-width="0.8"/>
<path d="M848.1 287.0L841.9 292.8M841.9 292.8L833.8 290.3M833.8 290.3L831.9 282.0M831.9 282.0L838.1 276.2M838.1 276.2L846.2 278.7M846.2 278.7L848.1 287.0M848.1 287.0L840.0 284.5M841.9 292.8L840.0 284.5M833.8 290.3L840.0 284.5M831.9 282.0L840.0 284.5M838.1 276.2L840.0 284.5M846.2 278.7L840.0 284.5M853.6 293.8L847.1 299.4M847.1 299.4L838.7 301.0M838.7 301.0L830.7 298.1M830.7 298.1L825.1 291.6M825.1 291.6L823.5 283.2M823.5 283.2L826.4 275.2M826.4 275.2L832.9 269.6M832.9 269.6L841.3 268.0M841.3 268.0L849.3 270.9M849.3 270.9L854.9 277.4M854.9 277.4L856.5 285.8M856.5 285.8L853.6 293.8M853.6 293.8L848.1 287.0M853.6 293.8L841.9 292.8M847.1 299.4L841.9 292.8M847.1 299.4L848.1 287.0M838.7 301.0L841.9 292.8M838.7 301.0L833.8 290.3M830.7 298.1L833.8 290.3M830.7 298.1L841.9 292.8M825.1 291.6L833.8 290.3M825.1 291.6L831.9 282.0M823.5 283.2L831.9 282.0M823.5 283.2L833.8 290.3M826.4 275.2L831.9 282.0M826.4 275.2L838.1 276.2M832.9 269.6L838.1 276.2M832.9 269.6L831.9 282.0M841.3 268.0L838.1 276.2M841.3 268.0L846.2 278.7M849.3 270.9L846.2 278.7M849.3 270.9L838.1 276.2M854.9 277.4L846.2 278.7M854.9 277.4L848.1 287.0M856.5 285.8L848.1 287.0M856.5 285.8L846.2 278.7M855.7 304.2L848.0 308.4M848.0 308.4L839.3 309.7M839.3 309.7L830.7 307.9M830.7 307.9L823.3 303.4M823.3 303.4L817.8 296.5M817.8 296.5L815.1 288.2M815.1 288.2L815.3 279.4M815.3 279.4L818.5 271.3M818.5 271.3L824.3 264.8M824.3 264.8L832.0 260.6M832.0 260.6L840.7 259.3M840.7 259.3L849.3 261.1M849.3 261.1L856.7 265.6M856.7 265.6L862.2 272.5M862.2 272.5L864.9 280.8M864.9 280.8L864.7 289.6M864.7 289.6L861.5 297.7M861.5 297.7L855.7 304.2M855.7 304.2L847.1 299.4M855.7 304.2L853.6 293.8M848.0 308.4L847.1 299.4M848.0 308.4L838.7 301.0M839.3 309.7L838.7 301.0M839.3 309.7L847.1 299.4M830.7 307.9L830.7 298.1M830.7 307.9L838.7 301.0M823.3 303.4L830.7 298.1M823.3 303.4L825.1 291.6M817.8 296.5L825.1 291.6M817.8 296.5L830.7 298.1M815.1 288.2L823.5 283.2M815.1 288.2L825.1 291.6M815.3 279.4L823.5 283.2M815.3 279.4L826.4 275.2M818.5 271.3L826.4 275.2M818.5 271.3L823.5 283.2M824.3 264.8L832.9 269.6M824.3 264.8L826.4 275.2M832.0 260.6L832.9 269.6M832.0 260.6L841.3 268.0M840.7 259.3L841.3 268.0M840.7 259.3L832.9 269.6M849.3 261.1L849.3 270.9M849.3 261.1L841.3 268.0M856.7 265.6L849.3 270.9M856.7 265.6L854.9 277.4M862.2 272.5L854.9 277.4M862.2 272.5L849.3 270.9M864.9 280.8L856.5 285.8M864.9 280.8L854.9 277.4M864.7 289.6L856.5 285.8M864.7 289.6L853.6 293.8M861.5 297.7L853.6 293.8M861.5 297.7L856.5 285.8" stroke="#44da44" stroke-width="0.95" fill="none"/>
<path d="M603 298 A114 54.5 0 0 1 831 298 L831 398 L603 398 Z" fill="#a8aaae" fill-opacity="0.55" clip-path="url(#gc)"/>
<path d="M818 272 A25.2 25.2 0 0 1 864 277" fill="none" stroke="#2a2a2a" stroke-width="1.1"/>
</g>
<ellipse cx="717" cy="298" rx="114" ry="54.5" fill="none" stroke="#1e1e1e" stroke-width="1.1" clip-path="url(#gc)"/>
<path d="M842.5 245.0L829.7 259.5" stroke="#2e2e2e" stroke-width="1.8"/><path d="M831.0 258.1L833.3 252.1L836.6 255.0Z" fill="#2e2e2e"/>
<path d="M862.0 249.0L849.6 262.6" stroke="#2e2e2e" stroke-width="1.8"/><path d="M850.8 261.3L853.2 255.4L856.5 258.3Z" fill="#2e2e2e"/>
<path d="M876.7 266.0L864.0 278.6" stroke="#2e2e2e" stroke-width="1.8"/><path d="M865.2 277.4L867.9 271.6L871.0 274.8Z" fill="#2e2e2e"/>
<path d="M876.7 285.0L864.7 297.0" stroke="#2e2e2e" stroke-width="1.8"/><path d="M865.8 295.9L868.5 290.1L871.6 293.2Z" fill="#2e2e2e"/>
<path d="M828.0 255.5L816.0 268.0" stroke="#2e2e2e" stroke-width="1.8"/><path d="M817.1 266.8L819.7 261.0L822.8 264.0Z" fill="#2e2e2e"/>
<path d="M563.5 405.3L576.0 392.0" stroke="#2e2e2e" stroke-width="1.8"/><path d="M574.8 393.3L572.3 399.1L569.1 396.1Z" fill="#2e2e2e"/>
<path d="M556.0 421.5L570.0 406.7" stroke="#2e2e2e" stroke-width="1.8"/><path d="M568.6 408.2L566.1 414.1L562.9 411.0Z" fill="#2e2e2e"/>
<path d="M581.6 401.0L595.0 386.5" stroke="#2e2e2e" stroke-width="1.8"/><path d="M593.7 387.9L591.2 393.8L588.0 390.9Z" fill="#2e2e2e"/>
<path d="M599.8 413.4L614.0 398.6" stroke="#2e2e2e" stroke-width="1.8"/><path d="M612.6 400.1L610.0 406.0L606.8 402.9Z" fill="#2e2e2e"/>
<path d="M563.5 440.0L577.0 426.0" stroke="#2e2e2e" stroke-width="1.8"/><path d="M575.7 427.4L573.1 433.2L569.9 430.2Z" fill="#2e2e2e"/>
<path d="M583.7 450.0L595.8 437.0" stroke="#2e2e2e" stroke-width="1.8"/><path d="M594.7 438.2L592.2 444.1L589.0 441.1Z" fill="#2e2e2e"/>
<path d="M600.5 448.4L614.0 434.0" stroke="#2e2e2e" stroke-width="1.8"/><path d="M612.7 435.4L610.2 441.3L607.0 438.3Z" fill="#2e2e2e"/>
<path d="M608.0 432.0L622.7 416.8" stroke="#2e2e2e" stroke-width="1.8"/><path d="M621.2 418.4L618.6 424.2L615.4 421.1Z" fill="#2e2e2e"/>
<path d="M698.7 490L698.7 512" stroke="#8a8a8a" stroke-width="1.3"/>
<path d="M718.6 485L718.6 509" stroke="#8a8a8a" stroke-width="1.3"/>
<path d="M738.8 490L738.8 514" stroke="#8a8a8a" stroke-width="1.3"/>
<path d="M689 493L689 527" stroke="#2a2a2a" stroke-width="1.5"/><path d="M687 518H691L689 523Z" fill="#222"/>
<path d="M697.9 508L697.9 536" stroke="#2a2a2a" stroke-width="1.5"/><path d="M695.9 527H699.9L697.9 532Z" fill="#222"/>
<path d="M717 512L717 542" stroke="#2a2a2a" stroke-width="1.5"/><path d="M715 533H719L717 538Z" fill="#222"/>
<path d="M738.5 508L738.5 537" stroke="#2a2a2a" stroke-width="1.5"/><path d="M736.5 528H740.5L738.5 533Z" fill="#222"/>
<path d="M746.8 493L746.8 527" stroke="#2a2a2a" stroke-width="1.5"/><path d="M744.8 518H748.8L746.8 523Z" fill="#222"/>
</g>
<rect x="604.5" y="623.5" width="227" height="10" fill="#fff" stroke="#111" stroke-width="1"/>
<rect x="604.5" y="623.5" width="113" height="10" fill="#000"/>
<text x="600" y="618" font-size="12" fill="#222" font-family="Liberation Sans">0</text>
<text x="802" y="618" font-size="12" fill="#111" font-family="Liberation Sans">4.000</text>
<text x="843.5" y="618" font-size="12" fill="#111" font-family="Liberation Sans">(m)</text>
<text x="702" y="647.3" font-size="12" fill="#111" font-family="Liberation Sans">2.000</text>
<g fill="#fff">
<path d="M958 178.3 L971 152.2 L977.8 152.2 L988.2 178.3 L979.6 178.3 L973.8 162.5 L967.2 178.3 Z"/>
<text x="989.5" y="178.3" font-size="34" font-weight="bold" font-family="Liberation Sans" textLength="76.5" lengthAdjust="spacingAndGlyphs">nsys</text>
<text x="999.8" y="201.7" font-size="17" font-weight="bold" font-family="Liberation Sans" textLength="66" lengthAdjust="spacingAndGlyphs">2025 R2</text>
</g>
<path d="M1009 617 L1009 590" stroke="#0000dd" stroke-width="1.6"/><path d="M1009 584 L1005.5 593 L1012.5 593Z" fill="#0000dd"/>
<path d="M1009 617 L1037 623" stroke="#e00000" stroke-width="1.7"/><path d="M1043 624.5 L1035 619.5 L1034 627Z" fill="#dd0000"/>
<path d="M1009 617 L1020 604" stroke="#009000" stroke-width="1.6"/><path d="M1024 600 L1016 603.5 L1021 608Z" fill="#008800"/>
<circle cx="1034.2" cy="596.3" r="3.2" fill="#20e8f0"/>
<text x="1006" y="583" font-size="10.5" font-weight="bold" fill="#1010ee" font-family="Liberation Sans">Z</text>
<text x="1047" y="629.5" font-size="10" font-weight="bold" fill="#f02828" font-family="Liberation Sans">X</text>
<text x="1024.5" y="601.5" font-size="9" font-weight="bold" fill="#10a010" font-family="Liberation Sans">Y</text>
</svg>
<div class="a" style="left:362px;top:672px;width:711px;height:117px;background:#fff;border:1px solid #9ca0a6"></div>
<svg class="a" style="left:1068px;top:806px" width="9" height="9"><g fill="#bcbcbc"><rect x="6" y="0" width="2" height="2"/><rect x="3" y="3" width="2" height="2"/><rect x="6" y="3" width="2" height="2"/><rect x="0" y="6" width="2" height="2"/><rect x="3" y="6" width="2" height="2"/><rect x="6" y="6" width="2" height="2"/></g></svg>
<div class="badge" style="left:257.0px;top:25.5px">1</div>
<div class="badge" style="left:759.0px;top:70.8px">2</div>
<div class="badge" style="left:294.2px;top:207.5px">3</div>
<div class="badge" style="left:485.8px;top:315.2px">4</div>
<div class="badge" style="left:502.5px;top:725.8px">5</div>
</body></html>
